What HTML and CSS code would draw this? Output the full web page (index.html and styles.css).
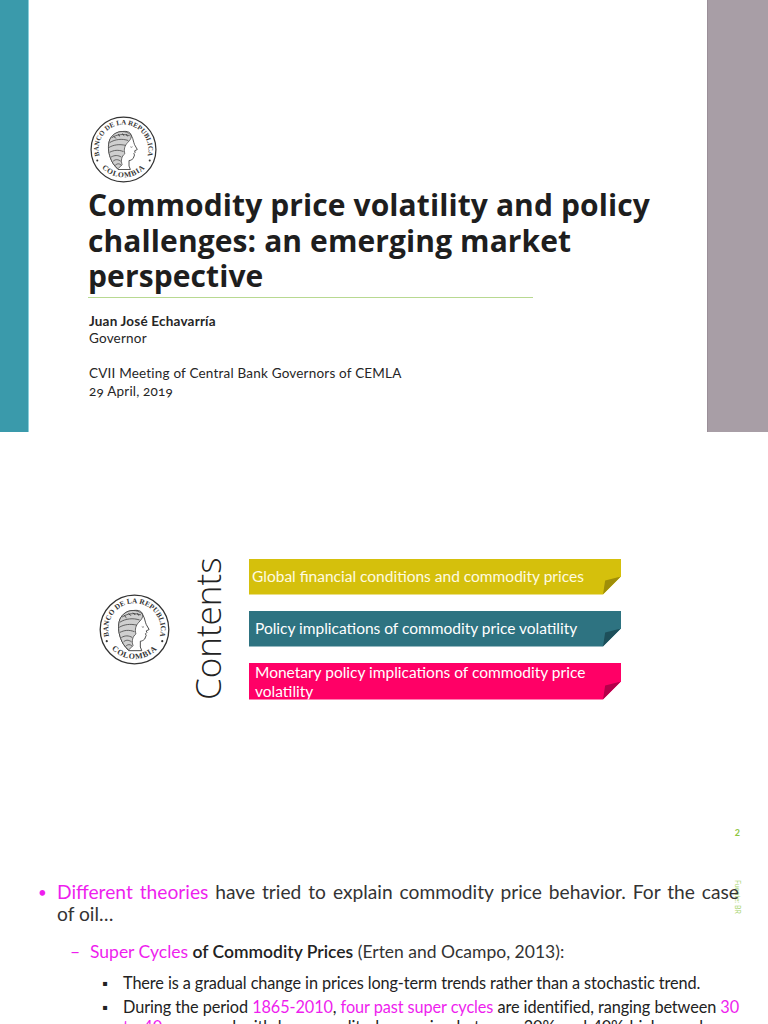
FILE: index.html
```html
<!DOCTYPE html>
<html lang="en">
<head>
<meta charset="utf-8">
<title>Commodity price volatility and policy challenges</title>
<link rel="stylesheet" href="styles.css">
</head>
<body>
<div class="page">
  <section class="slide slide1">
    <div class="bar-left"></div>
    <div class="s1-content">
      <svg class="logo logo-sm" viewBox="0 0 100 100" aria-label="Banco de la República Colombia">
        <defs>
          <path id="arcTop1" d="M 17.4 65.2 A 36 36 0 1 1 82.6 65.2"/>
          <path id="arcBot1" d="M 18 76 A 43 43 0 0 0 82 76"/>
        </defs>
        <circle cx="50" cy="50" r="47" fill="none" stroke="#333" stroke-width="1.8"/>
        <text class="logo-txt"><textPath href="#arcTop1" startOffset="50%" text-anchor="middle">BANCO DE LA REPUBLICA</textPath></text>
        <text class="logo-txt logo-txt-b"><textPath href="#arcBot1" startOffset="50%" text-anchor="middle">COLOMBIA</textPath></text>
        <circle cx="12" cy="66" r="1.5" fill="#333"/>
        <circle cx="88" cy="66" r="1.5" fill="#333"/>
        <path d="M48 24 C56 23 60 25 61 29 C63 32 64 36 65 40 L66 43 L70 50 L66 52 L67 54 L65 56 L66 58 L64 63 C62 65 60 66 58 66 L58 74 L60 79 L42 79 C36 73 33 68 31 62 C28 54 27 44 30 36 C33 29 40 24 48 24 Z" fill="#fff" stroke="#333" stroke-width="1.2"/>
        <path d="M48 24 C40 24 33 29 30 36 C27 44 28 54 31 62 C33 68 36 73 42 78 L48 72 C46 66 47 60 52 56 C50 50 52 44 56 40 C60 36 62 33 61 29 C57 25 52 24 48 24 Z" fill="#cfcfcf" stroke="#333" stroke-width="1"/>
        <path d="M33 33 C40 28 50 27 59 30 M30 40 C38 35 48 34 57 37 M29 47 C36 43 44 42 53 44 M30 54 C36 51 42 50 50 53 M32 61 C37 58 42 58 47 61 M35 67 C38 64 42 64 46 67 M38 73 C41 70 44 70 47 73" fill="none" stroke="#444" stroke-width="1.1"/>
        <path d="M36 31 l3 3 M42 28 l3 3 M48 27 l3 3 M54 28 l2 3" fill="none" stroke="#222" stroke-width="1.2"/>
        <path d="M60 46 C61 47 62 47 63 46" fill="none" stroke="#333" stroke-width="0.9"/>
      </svg>
      <h1 class="title">Commodity price volatility and policy<br>challenges: an emerging market<br>perspective</h1>
      <div class="rule"></div>
      <div class="meta">
        <p class="name">Juan José Echavarría</p>
        <p>Governor</p>
      </div>
      <div class="meta meta-event">
        <p>CVII Meeting of Central Bank Governors of CEMLA</p>
        <p class="onum">29 April, 2019</p>
      </div>
    </div>
    <div class="bar-right"></div>
  </section>

  <section class="slide slide2">
    <div class="toc-row">
      <svg class="logo logo-md" viewBox="0 0 100 100" aria-label="Banco de la República Colombia">
        <defs>
          <path id="arcTop2" d="M 17.4 65.2 A 36 36 0 1 1 82.6 65.2"/>
          <path id="arcBot2" d="M 18 76 A 43 43 0 0 0 82 76"/>
        </defs>
        <circle cx="50" cy="50" r="47" fill="none" stroke="#333" stroke-width="1.8"/>
        <text class="logo-txt"><textPath href="#arcTop2" startOffset="50%" text-anchor="middle">BANCO DE LA REPUBLICA</textPath></text>
        <text class="logo-txt logo-txt-b"><textPath href="#arcBot2" startOffset="50%" text-anchor="middle">COLOMBIA</textPath></text>
        <circle cx="12" cy="66" r="1.5" fill="#333"/>
        <circle cx="88" cy="66" r="1.5" fill="#333"/>
        <path d="M48 24 C56 23 60 25 61 29 C63 32 64 36 65 40 L66 43 L70 50 L66 52 L67 54 L65 56 L66 58 L64 63 C62 65 60 66 58 66 L58 74 L60 79 L42 79 C36 73 33 68 31 62 C28 54 27 44 30 36 C33 29 40 24 48 24 Z" fill="#fff" stroke="#333" stroke-width="1.2"/>
        <path d="M48 24 C40 24 33 29 30 36 C27 44 28 54 31 62 C33 68 36 73 42 78 L48 72 C46 66 47 60 52 56 C50 50 52 44 56 40 C60 36 62 33 61 29 C57 25 52 24 48 24 Z" fill="#cfcfcf" stroke="#333" stroke-width="1"/>
        <path d="M33 33 C40 28 50 27 59 30 M30 40 C38 35 48 34 57 37 M29 47 C36 43 44 42 53 44 M30 54 C36 51 42 50 50 53 M32 61 C37 58 42 58 47 61 M35 67 C38 64 42 64 46 67 M38 73 C41 70 44 70 47 73" fill="none" stroke="#444" stroke-width="1.1"/>
        <path d="M36 31 l3 3 M42 28 l3 3 M48 27 l3 3 M54 28 l2 3" fill="none" stroke="#222" stroke-width="1.2"/>
        <path d="M60 46 C61 47 62 47 63 46" fill="none" stroke="#333" stroke-width="0.9"/>
      </svg>
      <div class="contents-label">Contents</div>
      <ul class="toc">
        <li class="tab tab-yellow">Global financial conditions and commodity prices</li>
        <li class="tab tab-teal">Policy implications of commodity price volatility</li>
        <li class="tab tab-pink tab-two">Monetary policy implications of commodity price volatility</li>
      </ul>
    </div>
    <div class="pagenum">2</div>
  </section>

  <section class="slide slide3">
    <div class="side-note">Fuente: BR</div>
    <ul class="lvl1">
      <li><span class="jline"><span class="hl">Different theories</span> have tried to explain commodity price behavior. For the case</span> of oil…
        <ul class="lvl2">
          <li><span class="hl">Super Cycles</span> <span class="strong">of Commodity Prices</span> (Erten and Ocampo, 2013):
            <ul class="lvl3">
              <li>There is a gradual change in prices long-term trends rather than a stochastic trend.</li>
              <li><span class="jline">During the period <span class="hl">1865-2010</span>, <span class="hl">four past super cycles</span> are identified, ranging between <span class="hl">30</span></span> <span class="hl">to 40 years</span> and with large amplitudes varying between 20% and 40% higher or lower than the long-run trend.</li>
            </ul>
          </li>
        </ul>
      </li>
    </ul>
  </section>
</div>
</body>
</html>
```

FILE: styles.css
```css
* { box-sizing: border-box; }
html, body { margin: 0; padding: 0; background: #fff; }
body { font-family: Lato, "Open Sans", sans-serif; color: #222; }
.page { width: 768px; height: 1024px; overflow: hidden; }
p { margin: 0; }

/* slide 1 */
.slide1 { height: 432px; display: flex; }
.bar-left { width: 29px; background: #3a9aab; border-right: 1px solid #8ccfdb; }
.bar-right { width: 61px; background: #a89ea6; border-left: 1px solid #9a8f98; }
.s1-content { flex: 1; padding: 115px 0 0 59px; }
.logo { display: block; }
.logo-sm { width: 69px; height: 69px; margin-left: 1px; }
.logo-md { width: 73px; height: 73px; flex: none; }
.logo-txt { font: bold 10px "Liberation Serif", serif; fill: #333; letter-spacing: 0.1px; }
.logo-txt-b { font-size: 11px; letter-spacing: 1px; }
.title { margin: 3px 0 0; font: bold 30px/35.5px "Open Sans", sans-serif; color: #1e1e1e; letter-spacing: 0.1px; white-space: nowrap; }
.rule { width: 445px; height: 1px; background: #b8d991; margin-top: 3px; }
.meta { font-size: 13.5px; line-height: 17.5px; color: #262626; margin-top: 15px; padding-left: 1px; letter-spacing: 0.2px; }
.meta-event { margin-top: 17.5px; }
.name { font-weight: bold; }
.onum { font-variant-numeric: oldstyle-nums; }

/* slide 2 */
.slide2 { height: 432px; display: flex; flex-direction: column; padding: 123px 0 0 98px; }
.toc-row { display: flex; align-items: center; }
.contents-label { writing-mode: vertical-rl; transform: rotate(180deg); font: 300 35px/30px "Open Sans", sans-serif; color: #222; margin-left: 22px; height: 148px; text-align: center; white-space: nowrap; }
.toc { list-style: none; margin: 0 0 0 26px; padding: 0; display: flex; flex-direction: column; gap: 16px; }
.tab { position: relative; width: 372px; height: 36px; padding: 0 0 0 3px; display: flex; align-items: center; font-size: 15.5px; line-height: 19px; color: #fff; clip-path: polygon(0 0, 100% 0, 100% calc(100% - 18px), calc(100% - 18px) 100%, 0 100%); }
.tab::after { content: ""; position: absolute; right: 0; bottom: 0; width: 18px; height: 18px; clip-path: polygon(100% 0, 0 100%, 12% 22%); }
.tab-yellow { background: #d5c00c; color: #fffbe0; }
.tab-yellow::after { background: #9f8e08; }
.tab-teal { background: #2e7381; padding-left: 6px; }
.tab-teal::after { background: #1d4f5a; }
.tab-pink { background: #ff0066; }
.tab-pink::after { background: #b3004a; }
.tab-two { align-items: flex-start; padding-top: 0; padding-left: 6px; height: 37px; }
.pagenum { margin-top: auto; align-self: flex-end; margin-right: 28px; margin-bottom: 26px; font-size: 9px; color: #8dc63f; font-weight: bold; }

/* slide 3 */
.slide3 { position: relative; padding: 17px 29px 0 38px; color: #333; }
.side-note { position: absolute; left: 734px; top: 16px; writing-mode: vertical-rl; font-size: 7px; color: #a8d46f; line-height: 8px; }
.hl { color: #ee1eee; }
.strong { color: #222; font-weight: 600; }
.jline { display: block; text-align: justify; text-align-last: justify; white-space: nowrap; }
.lvl1, .lvl2, .lvl3 { margin: 0; padding: 0; list-style: none; }
.lvl1 > li { position: relative; padding-left: 19px; font-size: 19.2px; line-height: 22px; text-align: justify; }
.lvl1 > li > .jline { white-space: normal; }
.lvl1 > li::before { content: "•"; position: absolute; left: 0; top: 0; font-size: 15px; color: #ee1eee; }
.lvl2 { margin-top: 16px; }
.lvl2 > li { position: relative; padding-left: 33px; font-size: 17.5px; line-height: 22px; text-align: left; }
.lvl2 > li::before { content: "–"; position: absolute; left: 13px; top: 0; color: #ee1eee; }
.lvl3 { margin-top: 10px; display: flex; flex-direction: column; gap: 4px; }
.lvl3 > li { position: relative; padding-left: 33px; font-size: 16.3px; line-height: 20px; text-align: justify; color: #222; letter-spacing: -0.1px; }
.lvl3 > li > .jline { white-space: normal; }
.lvl3 > li::before { content: "▪"; position: absolute; left: 12px; top: 0; font-size: 15px; color: #222; }
```
